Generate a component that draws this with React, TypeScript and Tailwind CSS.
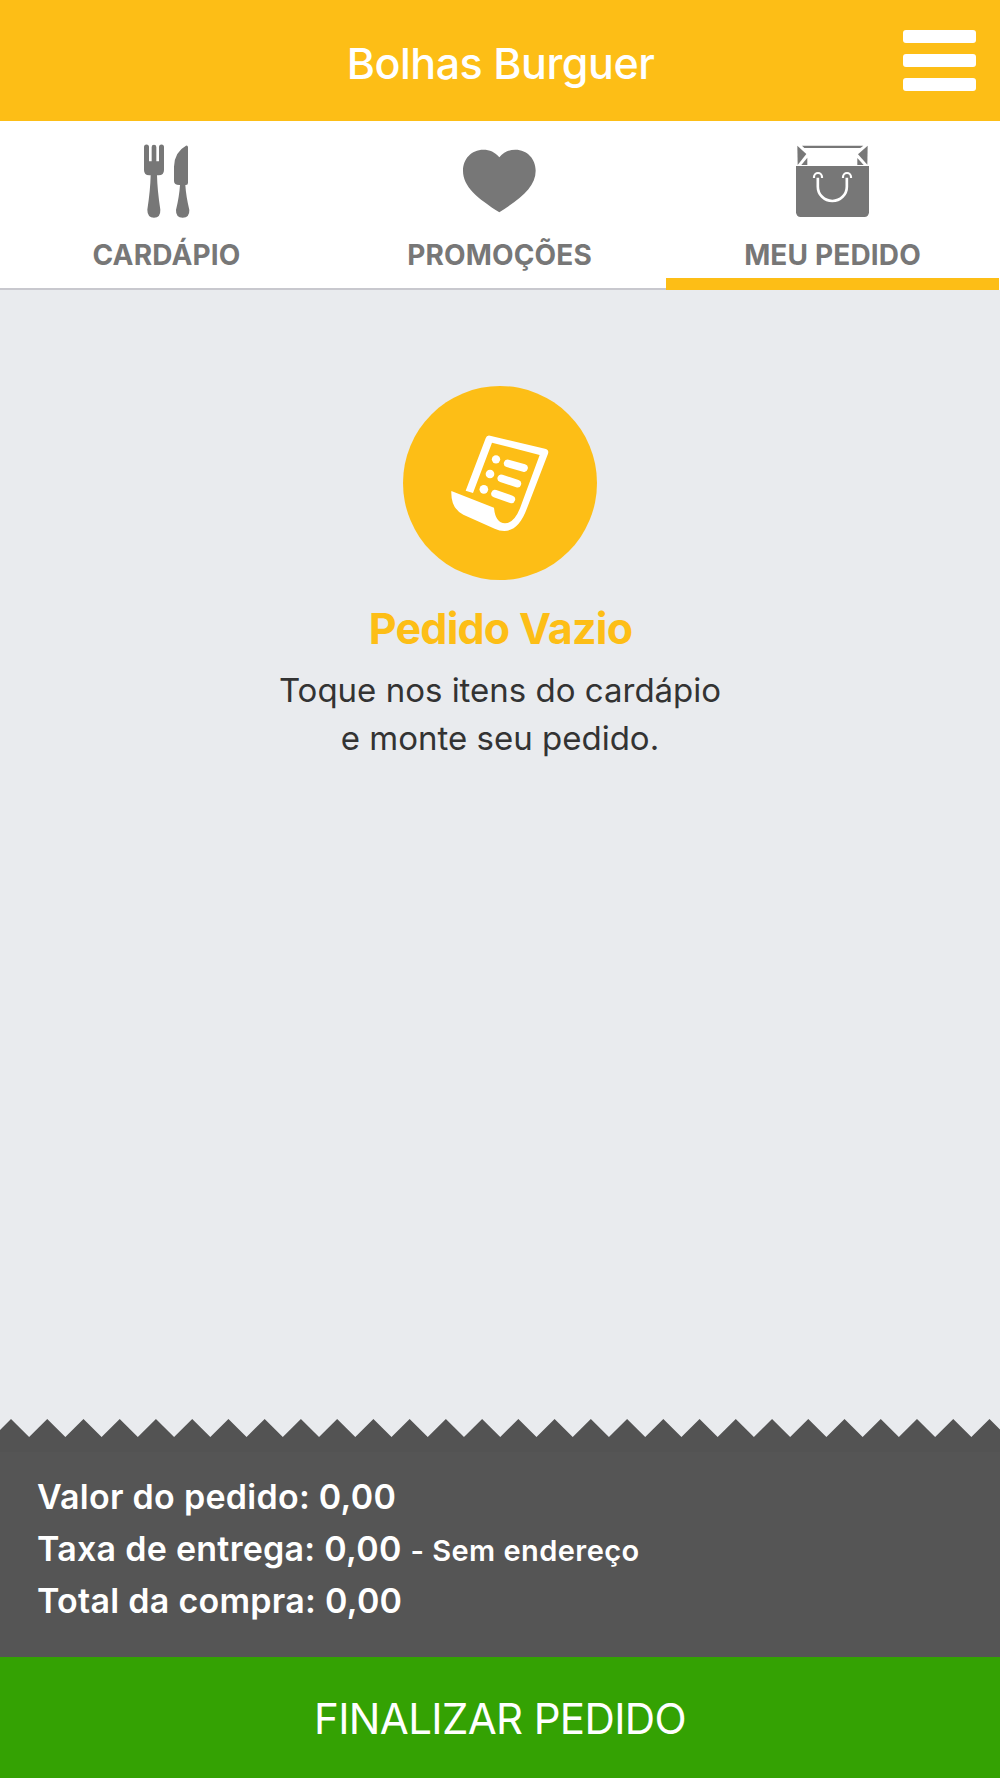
import React from "react";

const FONT = "font-['Inter','Liberation_Sans',sans-serif]";

function CutleryIcon() {
  return (
    <svg viewBox="150 42 219 222" className="w-[73px] h-[74px]" fill="currentColor">
      {/* Fork */}
      <path d="M192 51a7 7 0 0 1 15 0v43h8V51a7 7 0 0 1 14 0v43h8V51a7 7 0 0 1 15 0v69q0 16-16 16h-5q1 45 10 103q1 24-19 24t-20-24q9-58 10-103h-4q-16 0-16-16z" />
      {/* Knife */}
      <path d="M318 47q6-1 6 5v106q0 7-6 7h-2q2 33 12 75q1 23-20 23t-20-23q10-42 12-75h-2q-16 0-16-12V110q1-44 36-63z" />
    </svg>
  );
}

function HeartIcon() {
  return (
    <svg viewBox="219 42 219 222" className="w-[73px] h-[74px]" fill="currentColor">
      <path d="M328 82C315 66 299 59 280 59C244 59 219 87 219 122C219 170 262 204 328 247C394 204 437 170 437 122C437 87 412 59 376 59C357 59 341 66 328 82Z" />
    </svg>
  );
}

function BagIcon() {
  return (
    <svg viewBox="408 42 219 222" className="w-[73px] h-[74px]" fill="currentColor">
      <path d="M426 47h184l-9 7H433z" />
      <path d="M412 47l27 25-26 33z" />
      <path d="M623 47l-29 26 28 31z" />
      <path d="M442 83v22h-18z" />
      <path d="M592 84v21h19z" />
      <path d="M408 108h219v139q-1 14-14 14H422q-13 0-14-14z" />
      <g fill="none" stroke="#fff" strokeWidth="6.500">
        <path d="M462 144v-3a12 12 0 0 1 24 0v3" />
        <path d="M549 144v-3a12 12 0 0 1 24 0v3" />
        <path d="M473.500 143v27a43.500 43 0 0 0 87 0v-27" strokeWidth="8" />
      </g>
    </svg>
  );
}

function ReceiptIcon() {
  return (
    <svg viewBox="39 48 582 582" className="w-[194px] h-[194px]" fill="#fff">
      <path d="M227 362L287 205Q290 195 300 197L465 236Q478 240 474 251L411 415Q386 483 343 483Q328 483 314 476L220 434Q182 415 184 363L312 413Q316 459 345 460Q372 460 390 415L449 255L306 218L249 369Z" />
      <circle cx="318" cy="268" r="12.500" />
      <circle cx="300" cy="312" r="13" />
      <circle cx="281.500" cy="358" r="13" />
      <g stroke="#fff" strokeWidth="23" strokeLinecap="round">
        <path d="M353 280l49 14" />
        <path d="M334 325l48 16" />
        <path d="M315 371l49 17" />
      </g>
    </svg>
  );
}

const tabs = [
  { label: "CARDÁPIO", icon: <CutleryIcon />, active: false },
  { label: "PROMOÇÕES", icon: <HeartIcon />, active: false },
  { label: "MEU PEDIDO", icon: <BagIcon />, active: true },
];

// Torn paper edge on top of the totals
function ZigZag() {
  const step = 36.24;
  let d = `M${11 - step} 1`;
  for (let i = 0; i < 30; i++) {
    d += `l${step / 2} 18l${step / 2} -18`;
  }
  return (
    <svg viewBox="0 0 1000 34" className="block w-full h-[34px]" fill="#535353">
      <path d={`${d}V34H-30V1z`} />
    </svg>
  );
}

export default function App() {
  return (
    <div className={`flex flex-col w-[1000px] h-[1778px] overflow-hidden bg-[#e9ebee] ${FONT}`}>
      {/* Header */}
      <header className="grid grid-cols-[1fr_auto_1fr] items-center h-[121px] shrink-0 bg-[#fdbe16] text-white">
        <span />
        <h1 className="pt-1 pl-px text-[43px] leading-[52px] font-medium tracking-[-0.47px]">
          Bolhas Burguer
        </h1>
        <button className="flex flex-col gap-[11.5px] justify-self-end mr-6" aria-label="Menu">
          <span className="w-[73px] h-[12.5px] rounded-[3px] bg-white" />
          <span className="w-[73px] h-[12.5px] rounded-[3px] bg-white" />
          <span className="w-[73px] h-[12.5px] rounded-[3px] bg-white" />
        </button>
      </header>

      {/* Tabs */}
      <nav className="flex h-[169px] shrink-0 bg-white text-[#777777]">
        {tabs.map((tab) => (
          <a
            key={tab.label}
            className={
              tab.active
                ? "flex flex-col items-center w-[333px] pt-[23px] border-b-[12px] border-[#fdbe16]"
                : "flex flex-col items-center w-[333px] pt-[23px] border-b-2 border-[#c8c8ce]"
            }
          >
            {tab.icon}
            <span className="mt-[23px] text-[28px] leading-[28px] font-bold tracking-[0.15px]">
              {tab.label}
            </span>
          </a>
        ))}
      </nav>

      {/* Empty order */}
      <main className="flex flex-col items-center flex-1 pt-24 text-center">
        <div className="w-[194px] h-[194px] rounded-full bg-[#fdbe16]">
          <ReceiptIcon />
        </div>
        <h2 className="mt-[22px] pl-px text-[43px] leading-[52px] font-bold tracking-[-0.76px] text-[#fdbe16]">
          Pedido Vazio
        </h2>
        <p className="mt-3 text-[33px] leading-[48px] text-[#333333]">
          Toque nos itens do cardápio
          <br />e monte seu pedido.
        </p>
      </main>

      {/* Totals */}
      <footer className="shrink-0">
        <ZigZag />
        <div className="h-[205px] pt-[19px] pl-[37px] bg-[#555555] text-white text-[34px] leading-[52px] font-semibold tracking-[0.27px]">
          <p>Valor do pedido: 0,00</p>
          <p>
            Taxa de entrega: 0,00{" "}
            <span className="text-[29px] leading-none tracking-[0.45px]">- Sem endereço</span>
          </p>
          <p>Total da compra: 0,00</p>
        </div>
        <button className="flex items-center justify-center w-full h-[121px] pt-px bg-[#34a203] text-white text-[42px] tracking-[-0.63px]">
          FINALIZAR PEDIDO
        </button>
      </footer>
    </div>
  );
}
